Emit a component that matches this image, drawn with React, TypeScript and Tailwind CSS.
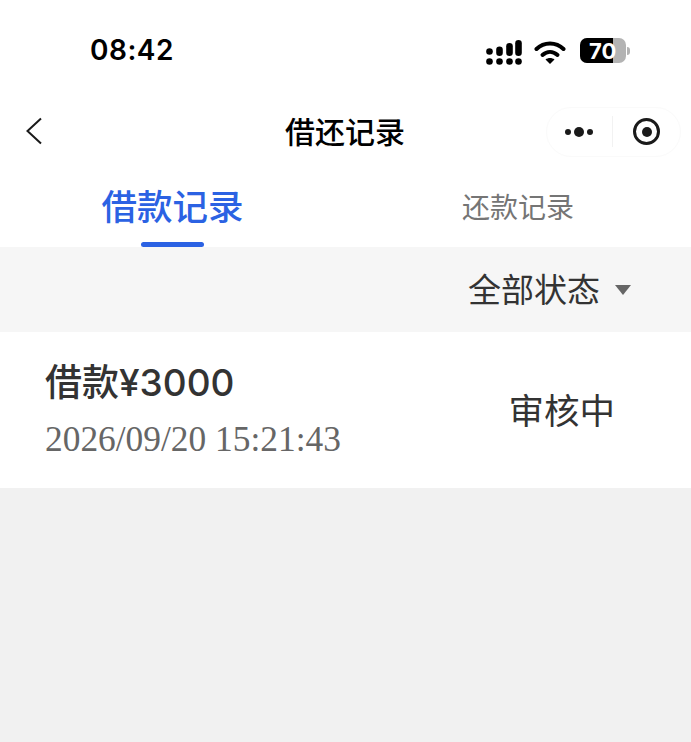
const cjk = "font-['Inter','Noto_Sans_CJK_SC',sans-serif]";

function StatusIcons() {
  return (
    <div className="flex items-start">
      <svg width="36" height="25" viewBox="0 0 36 25" className="block">
        <g fill="#000">
          <circle cx="3.5" cy="21.500" r="3.300" />
          <circle cx="13.500" cy="21.500" r="3.300" />
          <circle cx="23.500" cy="21.500" r="3.300" />
          <circle cx="32.500" cy="21.500" r="3.300" />
          <circle cx="3.500" cy="11.500" r="3.300" />
          <rect x="10.200" y="6.500" width="6.600" height="9.500" rx="3.300" />
          <rect x="20.200" y="3" width="6.600" height="13" rx="3.300" />
          <rect x="29.200" y="0" width="6.600" height="16" rx="3.300" />
        </g>
      </svg>
      <svg width="32" height="24" viewBox="0 0 32 24" className="block ml-[12px]">
        <g fill="none" stroke="#000" strokeWidth="4" strokeLinecap="round">
          <path d="M2.500 9 C10 1.500 22 1.500 29.500 9" />
          <path d="M8.500 15 C13 11 19 11 23.500 15" />
        </g>
        <path d="M11.500 19.500 C14 17.500 18 17.500 20.500 19.500 L16 24 Z" fill="#000" />
      </svg>
      <div className="relative flex items-center ml-[14px] -mt-[2px]">
        <div className="relative h-[25px] w-[46px] rounded-[7px] bg-[#b3b3b3] overflow-hidden">
          <div className="h-full w-[33px] bg-black" />
        </div>
        <span className="absolute left-[9px] top-1/2 -translate-y-1/2 text-[22px] leading-none font-bold text-white font-['Inter',sans-serif]">70</span>
        <div className="ml-[1px] h-2 w-[3px] rounded-r-full bg-[#b3b3b3]" />
      </div>
    </div>
  );
}

export default function App() {
  return (
    <div className={`w-[691px] h-[742px] bg-[#f1f1f1] flex flex-col overflow-hidden ${cjk}`}>
      <div className="h-[100px] bg-white flex items-start justify-between pl-[90px] pr-[61px] pt-[33px]">
        <span className="text-[28px] leading-[34px] font-semibold text-black tracking-[0.5px]">08:42</span>
        <div className="pt-[7px]"><StatusIcons /></div>
      </div>

      <div className="h-[65px] bg-white flex items-center justify-between pl-[25px] pr-[10px] relative">
        <svg width="18" height="28" viewBox="0 0 18 28" className="block -mt-[3px]">
          <path d="M16 1.500 L2.500 14 L16 26.500" fill="none" stroke="#1a1a1a" strokeWidth="2" />
        </svg>
        <span className="absolute left-[285px] top-[12px] text-[30px] leading-[40px] font-medium text-black">借还记录</span>
        <div className="w-[135px] h-[50px] -mt-[2px] rounded-full border border-[#fafafa] flex items-center">
          <div className="flex-1 flex items-center justify-center gap-[3px] pr-[2px]">
            <span className="w-[6px] h-[6px] rounded-full bg-[#1a1a1a]" />
            <span className="w-[10px] h-[10px] rounded-full bg-[#1a1a1a]" />
            <span className="w-[6px] h-[6px] rounded-full bg-[#1a1a1a]" />
          </div>
          <div className="w-px h-[31px] bg-[#f2f2f2]" />
          <div className="w-[67px] flex items-center justify-center">
            <span className="w-[27px] h-[27px] rounded-full border-[3px] border-[#1a1a1a] flex items-center justify-center">
              <span className="w-[10px] h-[10px] rounded-full bg-[#1a1a1a]" />
            </span>
          </div>
        </div>
      </div>

      <div className="h-[82px] bg-white flex">
        <div className="w-[345px] flex flex-col items-center">
          <span className="text-[35.500px] leading-[46px] font-medium text-[#2b62e3] mt-[20px]">借款记录</span>
          <div className="mt-auto w-[63px] h-[5px] rounded-full bg-[#2b62e3]" />
        </div>
        <div className="w-[346px] flex justify-center">
          <span className="text-[28px] leading-[40px] text-[#757575] mt-[23px]">还款记录</span>
        </div>
      </div>

      <div className="h-[85px] bg-[#f6f6f6] flex items-center justify-end pr-[60px]">
        <span className="text-[33px] leading-[44px] text-[#333333]">全部状态</span>
        <span className="ml-[15px] mt-[1px] w-0 h-0 border-x-[8px] border-x-transparent border-t-[10px] border-t-[#666666]" />
      </div>

      <div className="h-[156px] bg-white flex items-center justify-between pl-[45px] pr-[76px]">
        <div className="flex flex-col">
          <span className="text-[37px] leading-[48px] font-medium text-[#333333] -mt-[1px]">借款¥3000</span>
          <span className="text-[35.400px] leading-[44px] text-[#666666] font-['Liberation_Serif',serif] mt-[10px]">2026/09/20 15:21:43</span>
        </div>
        <span className="text-[35.500px] leading-[46px] text-[#333333] mt-[4px]">审核中</span>
      </div>
    </div>
  );
}
